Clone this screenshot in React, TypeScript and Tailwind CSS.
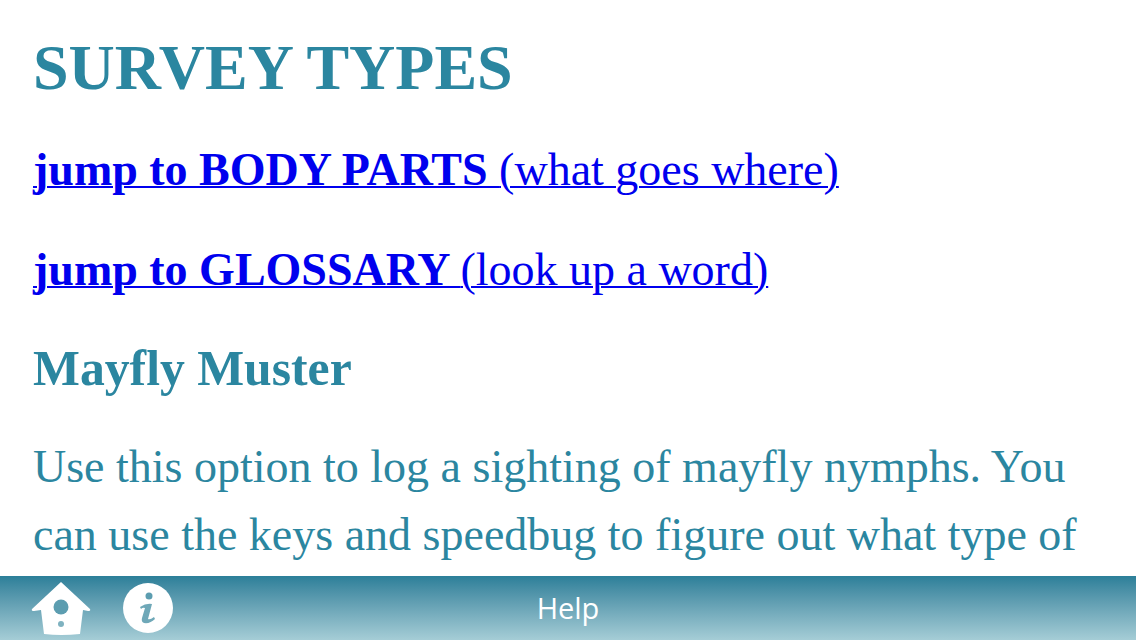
const TEAL = 'text-[#2b86a0]';

function HomeIcon() {
  return (
    <svg width="60" height="56" viewBox="0 0 60 56">
      <path d="M30 2 L59 29 Q60 31 57 31 L52 30 L49 54 Q30 56 13 54 L10 30 L3 31 Q0 31 1 29 Z" fill="#fff" />
      <circle cx="30" cy="27" r="7.5" fill="#5c9db0" />
      <circle cx="30" cy="44" r="3" fill="#7fb2c0" />
    </svg>
  );
}

function InfoIcon() {
  return (
    <svg width="50" height="50" viewBox="0 0 50 50">
      <circle cx="25" cy="25" r="25" fill="#fff" />
      <circle cx="26" cy="13" r="3.5" fill="#5c9db0" />
      <path d="M17 24 Q23 20 29 21 L25 36 Q27 37 31 34 L32 36 Q27 41 21 40 Q18 39 19 35 L22 25 Q20 24 18 26 Z" fill="#6fa8b8" />
    </svg>
  );
}

export default function App() {
  return (
    <div className="w-[1136px] h-[640px] flex flex-col bg-white overflow-hidden font-['Liberation_Serif',serif]">
      <div className="flex-1 overflow-hidden px-[33px] pt-[30px]">
        <h1 className={`text-[64px] leading-[76px] font-bold ${TEAL}`}>SURVEY TYPES</h1>
        <p className="mt-[38px] text-[46px] leading-[52px]">
          <a href="#" className="text-[#0000ee] underline decoration-2"><b>jump to BODY PARTS </b>(what goes where)</a>
        </p>
        <p className="mt-[48px] text-[46px] leading-[52px]">
          <a href="#" className="text-[#0000ee] underline decoration-2"><b>jump to GLOSSARY </b>(look up a word)</a>
        </p>
        <h2 className={`mt-[45px] text-[49.7px] leading-[56px] font-bold ${TEAL}`}>Mayfly Muster</h2>
        <p className={`mt-[36px] text-[46px] leading-[68px] ${TEAL}`}>
          Use this option to log a sighting of mayfly nymphs. You can use the keys and speedbug to figure out what type of
        </p>
      </div>
      <div className="relative h-[64px] shrink-0 flex items-center bg-gradient-to-b from-[#2b7f99] to-[#a5cdd6]">
        <div className="flex items-center gap-[32px] pl-[31px]">
          <HomeIcon />
          <InfoIcon />
        </div>
        <span className="absolute inset-x-0 text-center text-white text-[29px] font-['Open_Sans',sans-serif]">Help</span>
      </div>
    </div>
  );
}
